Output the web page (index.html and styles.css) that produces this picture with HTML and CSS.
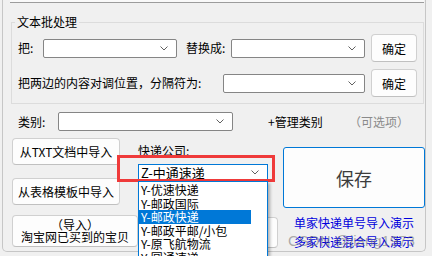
FILE: index.html
```html
<!DOCTYPE html>
<html lang="zh-CN">

<head>
  <meta charset="UTF-8">
  <meta name="viewport" content="width=device-width, initial-scale=1.0">
  <title>快递单号导入</title>
  <link rel="stylesheet" href="styles.css">
</head>

<body>
  <div class="frame">
    <div class="topbar"></div>

    <!-- 文本批处理 -->
    <fieldset class="batch">
      <legend>文本批处理</legend>
      <div class="row">
        <span class="lbl lbl-ba">把:</span>
        <div class="combo w134">
          <svg class="arrow" width="8" height="5" viewBox="0 0 8 5"><polyline points="0.5,0.5 4,4 7.5,0.5" /></svg>
        </div>
        <span class="lbl lbl-to">替换成:</span>
        <div class="combo w134">
          <svg class="arrow" width="8" height="5" viewBox="0 0 8 5"><polyline points="0.5,0.5 4,4 7.5,0.5" /></svg>
        </div>
        <button class="btn btn-ok">确定</button>
      </div>
      <div class="row">
        <span class="lbl lbl-swap">把两边的内容对调位置，分隔符为:</span>
        <div class="combo w142">
          <svg class="arrow" width="8" height="5" viewBox="0 0 8 5"><polyline points="0.5,0.5 4,4 7.5,0.5" /></svg>
        </div>
        <button class="btn btn-ok">确定</button>
      </div>
    </fieldset>

    <!-- 类别 -->
    <div class="cat-row">
      <span class="lbl lbl-cat">类别:</span>
      <div class="combo w175">
        <svg class="arrow" width="8" height="5" viewBox="0 0 8 5"><polyline points="0.5,0.5 4,4 7.5,0.5" /></svg>
      </div>
      <span class="manage">+管理类别</span>
      <span class="optional">（可选项）</span>
    </div>

    <div class="lower">
      <div class="col-left">
        <button class="btn btn-imp">从TXT文档中导入</button>
        <button class="btn btn-imp btn-xls">从表格模板中导入</button>
        <button class="btn btn-taobao">（导入）<br>淘宝网已买到的宝贝</button>
      </div>

      <div class="col-mid">
        <span class="lbl lbl-exp">快递公司:</span>
        <div class="combo combo-exp">
          <span class="combo-text">Z-中通速递</span>
          <svg class="arrow" width="8" height="5" viewBox="0 0 8 5"><polyline points="0.5,0.5 4,4 7.5,0.5" /></svg>
        </div>
        <button class="btn btn-hidden"></button>

        <div class="mark"></div>
        <ul class="droplist">
          <li>Y-优速快递</li>
          <li>Y-邮政国际</li>
          <li class="sel">Y-邮政快递</li>
          <li>Y-邮政平邮/小包</li>
          <li>Y-原飞航物流</li>
          <li>Y-圆通速递</li>
        </ul>
      </div>

      <div class="col-right">
        <button class="btn btn-save">保存</button>
        <a class="demo">单家快递单号导入演示</a>
        <a class="demo">多家快递混合导入演示</a>
      </div>
    </div>

    <div class="watermark">CSDN @jiang1973</div>
  </div>
</body>

</html>
```

FILE: styles.css
```css
html,
body {
  margin: 0;
  height: 100%;
  overflow: hidden;
}

body {
  background: #f0f0f0;
  font-family: "Noto Sans CJK SC", "Noto Sans", sans-serif;
  font-size: 12px;
  color: #000;
}

.frame {
  position: relative;
  box-sizing: border-box;
  width: 424px;
  height: 252px;
  margin-left: 2px;
  border: 1px solid #c6c6c6;
  border-top: none;
  border-radius: 0 0 5px 5px;
}

.topbar {
  width: 414px;
  height: 2px;
  margin-left: 7px;
  background: #f9f9f9;
  border-bottom: 1px solid #9c9c9c;
}

/* 文本批处理 */
.batch {
  box-sizing: border-box;
  width: 413px;
  min-inline-size: 0;
  margin: 10px 0 0 8px;
  padding: 3px 0 6px 6px;
  border: 1px solid #dcdcdc;
}

.batch legend {
  padding: 0 2px;
  margin-left: -3px;
  line-height: 18px;
}

.row {
  display: flex;
  align-items: center;
  height: 28px;
}

.row+.row {
  margin-top: 7px;
}

.lbl {
  flex: none;
  line-height: 18px;
  white-space: nowrap;
}

.lbl-ba {
  width: 25px;
}

.lbl-to {
  width: 45px;
  margin-left: 9px;
}

.lbl-swap {
  width: 205px;
}

.combo {
  position: relative;
  flex: none;
  box-sizing: border-box;
  height: 19px;
  background: #fff;
  border: 1px solid #858585;
  border-radius: 2px;
}

.arrow {
  position: absolute;
  right: 8px;
  top: 6px;
  fill: none;
  stroke: #606060;
  stroke-width: 1;
}

.w134 {
  width: 134px;
}

.w142 {
  width: 142px;
}

.w175 {
  width: 175px;
}

.btn {
  box-sizing: border-box;
  padding: 0;
  background: #fdfdfd;
  border: 1px solid #d0d0d0;
  border-bottom-color: #c0c0c0;
  border-radius: 4px;
  font-family: inherit;
  font-size: 12px;
  color: #000;
}

.btn-ok {
  flex: none;
  width: 46px;
  height: 28px;
  margin-left: 6px;
}

/* 类别 */
.cat-row {
  display: flex;
  align-items: center;
  height: 19px;
  margin-top: 8px;
  padding-left: 15px;
}

.lbl-cat {
  width: 40px;
}

.manage {
  width: 81px;
  margin-left: 35px;
  white-space: nowrap;
}

.optional {
  color: #8a8a8a;
  white-space: nowrap;
}

/* 导入 */
.lower {
  display: flex;
  margin-top: 7px;
  padding-left: 9px;
}

.col-left {
  display: flex;
  flex-direction: column;
  width: 126px;
}

.btn-imp {
  width: 108px;
  height: 27px;
}

.btn-xls {
  margin-top: 13px;
}

.btn-taobao {
  width: 126px;
  height: 32px;
  margin-top: 10px;
  line-height: 12px;
}

.col-mid {
  position: relative;
  display: flex;
  flex-direction: column;
  width: 145px;
}

.lbl-exp {
  margin-top: 4px;
}

.combo-exp {
  width: 130px;
  height: 17px;
  margin-top: 4px;
  border-color: #0078d7;
  border-radius: 0;
}

.combo-text {
  display: block;
  padding-left: 2px;
  font-size: 13px;
  line-height: 15px;
}

.combo-exp .arrow {
  top: 5px;
}

.btn-hidden {
  width: 134px;
  height: 31px;
  margin: 36px 0 0 6px;
}

.mark {
  position: absolute;
  left: -21px;
  top: 17px;
  width: 158px;
  height: 27px;
  box-sizing: border-box;
  border: 3px solid #ef3a3a;
}

.droplist {
  position: absolute;
  left: 0;
  top: 43px;
  width: 130px;
  height: 75px;
  overflow: hidden;
  box-sizing: border-box;
  margin: 0;
  padding: 1px 16px 0 0;
  list-style: none;
  background: #fff;
  border: 1px solid #0078d7;
  border-bottom: none;
  box-shadow: 2px 2px 3px rgba(0, 0, 0, 0.3);
}

.droplist li {
  height: 13.5px;
  padding-left: 2px;
  line-height: 13.5px;
  white-space: nowrap;
}

.droplist .sel {
  background: #0078d7;
  color: #fff;
}

.col-right {
  display: flex;
  flex-direction: column;
  width: 142px;
  margin-top: 9px;
}

.btn-save {
  height: 61px;
  border-color: #0078d7;
  border-radius: 3px;
  font-size: 18px;
  color: #3c3c3c;
}

.demo {
  display: block;
  line-height: 19px;
  text-align: center;
  color: #0000dd;
}

.btn-save+.demo {
  margin-top: 5px;
}

.watermark {
  position: absolute;
  left: 285px;
  top: 232px;
  font-family: "Liberation Sans", sans-serif;
  font-size: 15px;
  color: rgba(110, 110, 110, 0.55);
  white-space: nowrap;
}
```
